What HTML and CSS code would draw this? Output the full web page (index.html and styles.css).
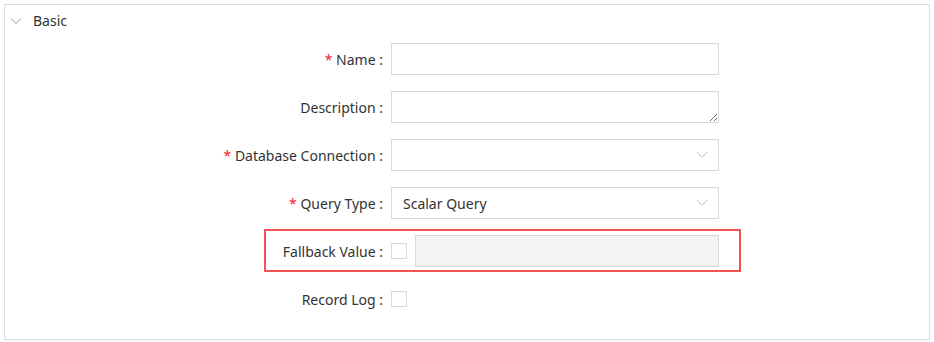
FILE: index.html
```html
<!DOCTYPE html>
<html lang="en">
<head>
    <meta charset="UTF-8">
    <title>Basic</title>
    <link rel="stylesheet" href="styles.css">
</head>
<body>
    <div class="panel">
        <div class="panel-header">
            <svg class="collapse-icon" width="12" height="8" viewBox="0 0 12 8">
                <path d="M1 1.5 L6 6.5 L11 1.5" fill="none" stroke="#999" stroke-width="1"/>
            </svg>
            <span>Basic</span>
        </div>
        <div class="form">
            <div class="form-row">
                <label class="form-label"><span class="required">*</span> Name :</label>
                <input class="form-input" type="text">
            </div>
            <div class="form-row">
                <label class="form-label">Description :</label>
                <textarea class="form-input form-textarea"></textarea>
            </div>
            <div class="form-row">
                <label class="form-label"><span class="required">*</span> Database Connection :</label>
                <div class="form-input form-select">
                    <span></span>
                    <svg width="12" height="8" viewBox="0 0 12 8">
                        <path d="M1 1 L6 6.5 L11 1" fill="none" stroke="#c4c4c4" stroke-width="1"/>
                    </svg>
                </div>
            </div>
            <div class="form-row">
                <label class="form-label"><span class="required">*</span> Query Type :</label>
                <div class="form-input form-select">
                    <span>Scalar Query</span>
                    <svg width="12" height="8" viewBox="0 0 12 8">
                        <path d="M1 1 L6 6.5 L11 1" fill="none" stroke="#c4c4c4" stroke-width="1"/>
                    </svg>
                </div>
            </div>
            <div class="form-row highlighted">
                <label class="form-label">Fallback Value :</label>
                <span class="checkbox"></span>
                <input class="form-input form-input-disabled" type="text" disabled>
                <div class="highlight-box"></div>
            </div>
            <div class="form-row">
                <label class="form-label">Record Log :</label>
                <span class="checkbox"></span>
            </div>
        </div>
    </div>
</body>
</html>
```

FILE: styles.css
```css
body {
    margin: 0;
    padding: 0;
    background: #fff;
    font-family: "Noto Sans", "Open Sans", Arial, sans-serif;
    font-size: 14px;
    color: #333;
}
.panel {
    margin: 4px;
    width: 924px;
    border: 1px solid #dcdcdc;
    padding-bottom: 24px;
}
.panel-header {
    display: flex;
    align-items: center;
    height: 32px;
    padding-left: 5px;
}
.panel-header span {
    margin-left: 11px;
    margin-top: -2px;
}
.collapse-icon {
    display: block;
}
.form {
    padding-top: 6px;
}
.form-row {
    display: flex;
    align-items: center;
    height: 32px;
    margin-bottom: 16px;
    position: relative;
}
.form-row:last-child {
    margin-bottom: 0;
}
.form-label {
    width: 378px;
    text-align: right;
    margin-right: 8px;
    white-space: nowrap;
}
.required {
    color: #f5222d;
}
.form-input {
    box-sizing: border-box;
    width: 328px;
    height: 32px;
    border: 1px solid #d9d9d9;
    background: #fff;
    margin: 0;
    padding: 0 11px;
    font-family: inherit;
    font-size: 14px;
    color: #333;
    outline: none;
}
.form-textarea {
    display: block;
    resize: vertical;
    padding-top: 5px;
}
.form-select {
    display: flex;
    align-items: center;
    justify-content: space-between;
    padding-right: 10px;
}
.form-input-disabled {
    width: 304px;
    background: #f3f3f3;
}
.checkbox {
    box-sizing: border-box;
    width: 16px;
    height: 16px;
    border: 1px solid #d9d9d9;
    background: #fff;
    margin-right: 8px;
}
.highlight-box {
    position: absolute;
    left: 259px;
    top: -6px;
    width: 477px;
    height: 43px;
    box-sizing: border-box;
    border: 2px solid #f25252;
    pointer-events: none;
}
```
